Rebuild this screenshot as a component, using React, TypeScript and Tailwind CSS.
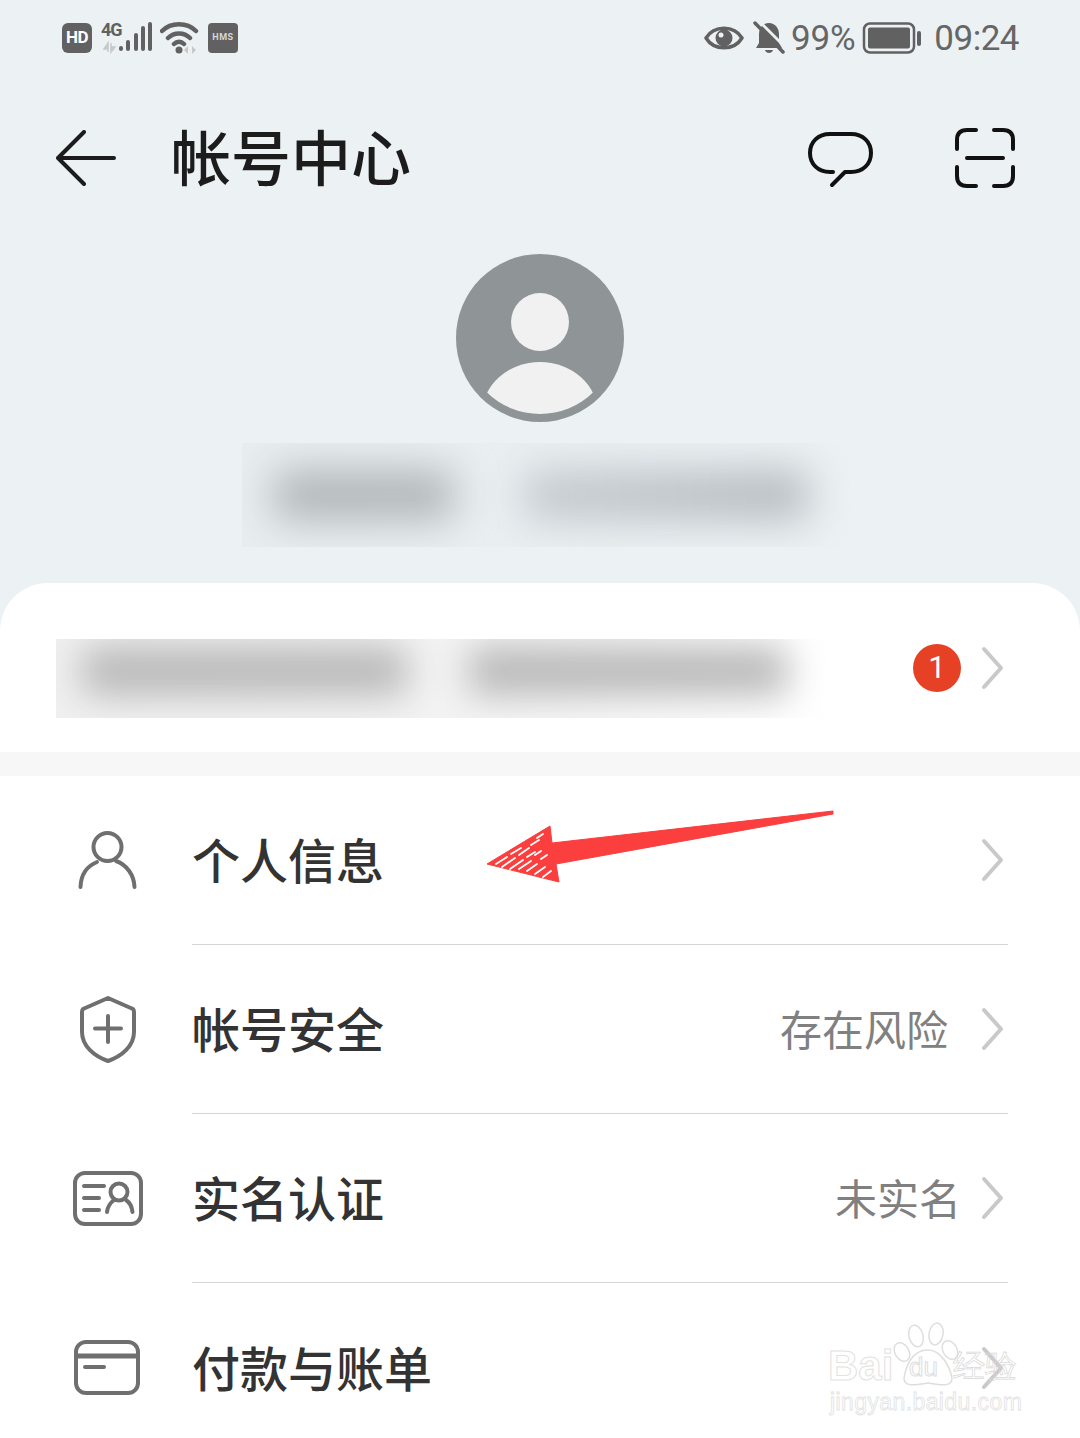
import type { ReactNode } from "react";

const Chevron = () => (
  <svg width="24" height="44" viewBox="0 0 24 44" fill="none" className="shrink-0">
    <path d="M4 3 L21 22 L4 41" stroke="#c9c9c9" strokeWidth="4" strokeLinecap="round" strokeLinejoin="round" />
  </svg>
);

const UserIcon = () => (
  <svg width="60" height="60" viewBox="0 0 60 60" fill="none" stroke="#6f6f6f" strokeWidth="4" strokeLinecap="round">
    <circle cx="29.5" cy="16" r="14" />
    <path d="M2.500 56 C3 44 9 35 19 31" />
    <path d="M38 30 C49 34 56 44 56.500 56" />
  </svg>
);

const ShieldIcon = () => (
  <svg width="60" height="68" viewBox="0 0 60 68" fill="none" stroke="#6f6f6f" strokeWidth="4" strokeLinecap="round" strokeLinejoin="round">
    <path d="M30 2 L55 13 Q56 14 56 16 L56 36 C56 50 44 60 30 65 C16 60 4 50 4 36 L4 16 Q4 14 5 13 Z" />
    <path d="M30 20 L30 46 M17 32.500 L43 32.500" />
  </svg>
);

const IdCardIcon = () => (
  <svg width="72" height="56" viewBox="0 0 72 56" fill="none" stroke="#6f6f6f" strokeWidth="4" strokeLinecap="round">
    <rect x="3" y="2" width="66" height="51" rx="10" />
    <path d="M12 15 L32 15 M12 27 L27 27 M12 39 L27 39" />
    <circle cx="47" cy="21" r="8.500" />
    <path d="M35 41 C35.500 36 38 32 42 29 M54 29 C57 31 60 36 60.500 41" />
  </svg>
);

const CardIcon = () => (
  <svg width="68" height="56" viewBox="0 0 68 56" fill="none" stroke="#6f6f6f" strokeWidth="4" strokeLinecap="round">
    <rect x="2" y="2" width="62" height="51" rx="10" />
    <path d="M2 16 L64 16" strokeWidth="5" strokeLinecap="butt" />
    <path d="M11 27 L30 27" />
  </svg>
);

const Row = ({ icon, label, value, valueClass }: { icon: ReactNode; label: string; value?: string; valueClass?: string }) => (
  <div className="flex h-[169px] items-stretch">
    <div className="flex w-[192px] shrink-0 items-center justify-center pl-[23px]">{icon}</div>
    <div className="mr-[72px] flex flex-1 items-center border-b border-[#d4d4d4]">
      <span className="flex-1 pb-[4px] text-[48px] font-medium leading-none text-[#333333]">{label}</span>
      {value && <span className={`pb-[3px] text-[42px] leading-none text-[#808080] ${valueClass}`}>{value}</span>}
      <div className="mr-[4px]"><Chevron /></div>
    </div>
  </div>
);

const StatusBar = () => (
  <div className="flex h-[76px] items-center justify-between pl-[62px] pr-[61px] text-[#616161]">
    <div className="flex items-center">
      <div className="flex h-[30px] w-[30px] items-center justify-center rounded-[6px] bg-[#616161] font-['Roboto',sans-serif] text-[17px] font-bold tracking-[-0.5px] text-white">HD</div>
      <div className="relative ml-[9px] h-[32px] w-[52px]">
        <span className="absolute left-0 top-[-2px] font-['Roboto',sans-serif] text-[18px] font-bold leading-[20px] tracking-[-1px]">4G</span>
        <svg width="52" height="32" viewBox="0 0 52 32" fill="none" className="absolute left-0 top-0">
          <path d="M7 21 L3 27 L7 27 Z M7 21 L7 30 M10 30 L10 21 M10 30 L14 25 L10 25 Z" fill="#c8c8c8" stroke="#c8c8c8" strokeWidth="1.500" />
          <path d="M20 26 L20 27 M27 20 L27 27 M35 13 L35 27 M42 6 L42 27 M49 2 L49 27" stroke="#616161" strokeWidth="4" strokeLinecap="round" />
        </svg>
      </div>
      <svg width="40" height="34" viewBox="0 0 40 34" fill="none" className="ml-[7px]">
        <path d="M2 10 C11 1 27 1 36 10 M8 17 C14 11 24 11 30 17 M14 23 C17 20 21 20 24 23" stroke="#616161" strokeWidth="4.500" strokeLinecap="round" />
        <circle cx="19" cy="29" r="3.500" fill="#616161" />
        <path d="M28 25 L24 29 L28 33 Z M32 25 L36 29 L32 33 Z" fill="#c8c8c8" />
      </svg>
      <div className="ml-[8px] flex h-[30px] w-[30px] items-center justify-center rounded-[4px] bg-[#616161] font-['Roboto',sans-serif] text-[9px] font-bold tracking-[0.5px] text-[#d8d8d8]">HMS</div>
    </div>
    <div className="flex items-center">
      <svg width="40" height="28" viewBox="0 0 40 28" fill="none">
        <path d="M2 14 C10 1 30 1 38 14 C30 27 10 27 2 14 Z" stroke="#616161" strokeWidth="3.500" strokeLinejoin="round" />
        <circle cx="20" cy="14" r="8.500" fill="#616161" />
        <circle cx="17" cy="11" r="2.500" fill="#ecf1f4" />
      </svg>
      <svg width="32" height="34" viewBox="0 0 32 34" fill="none" className="ml-[9px]">
        <path d="M3 27 L6 22 L6 13 C6 7 10 2 16 2 C22 2 26 7 26 13 L26 22 L29 27 Z" fill="#616161" />
        <path d="M12 29 L20 29 C19 33 13 33 12 29 Z" fill="#616161" />
        <path d="M5 -1 L34 28" stroke="#ecf1f4" strokeWidth="3" />
        <path d="M2 2 L30 31" stroke="#616161" strokeWidth="3.500" strokeLinecap="round" />
      </svg>
      <span className="ml-[6px] font-['Roboto',sans-serif] text-[35px] font-normal leading-none tracking-[-0.2px] text-[#666666]">99%</span>
      <svg width="60" height="32" viewBox="0 0 60 32" fill="none" className="ml-[7px]">
        <rect x="2" y="1.500" width="50" height="29" rx="6" stroke="#616161" strokeWidth="2.500" />
        <rect x="6" y="5.500" width="42" height="21" rx="2" fill="#616161" />
        <rect x="55" y="9" width="4" height="15" rx="2" fill="#616161" />
      </svg>
      <span className="ml-[12px] font-['Roboto',sans-serif] text-[35px] font-normal leading-none tracking-[-0.5px] text-[#666666]">09:24</span>
    </div>
  </div>
);

const Header = () => (
  <div className="flex h-[164px] items-center pl-[56px] pr-[64px] text-[#1c1c1c]">
    <svg width="60" height="56" viewBox="0 0 60 56" fill="none">
      <path d="M28 2 L2 28 L28 54 M2 28 L58 28" stroke="#1c1c1c" strokeWidth="4" strokeLinecap="round" strokeLinejoin="round" />
    </svg>
    <span className="ml-[55px] flex-1 pb-[6px] text-[60px] font-medium leading-none">帐号中心</span>
    <svg width="70" height="60" viewBox="0 0 70 60" fill="none">
      <path d="M27 44 L24 44 C12 44 4 36 4 25 C4 14 12 6 24 6 L45 6 C57 6 65 14 65 25 C65 36 57 44 45 44 L39 44 L26 57" stroke="#111" strokeWidth="4" strokeLinecap="round" strokeLinejoin="round" />
    </svg>
    <svg width="62" height="62" viewBox="0 0 62 62" fill="none" className="ml-[78px]">
      <path d="M22 3 L13 3 Q3 3 3 13 L3 22 M40 3 L49 3 Q59 3 59 13 L59 22 M3 40 L3 49 Q3 59 13 59 L22 59 M59 40 L59 49 Q59 59 49 59 L40 59 M13 31 L49 31" stroke="#111" strokeWidth="4" strokeLinecap="round" />
    </svg>
  </div>
);

const Avatar = () => (
  <svg width="168" height="168" viewBox="0 0 168 168" className="mx-auto mt-[14px] block">
    <defs>
      <clipPath id="inner"><circle cx="84" cy="84" r="76" /></clipPath>
    </defs>
    <circle cx="84" cy="84" r="84" fill="#8f9497" />
    <circle cx="84" cy="68" r="29" fill="#f1f1f1" />
    <ellipse cx="84" cy="160" rx="58" ry="52" fill="#f1f1f1" clipPath="url(#inner)" />
  </svg>
);

const Watermark = () => (
  <div className="pointer-events-none absolute left-[828px] top-[1322px] h-[96px] w-[196px] font-['Liberation_Sans',sans-serif]">
    <svg width="110" height="66" viewBox="0 0 110 66" fill="none" stroke="#dedede" strokeWidth="1.500" className="absolute left-[50px] top-0">
      <ellipse cx="38" cy="14" rx="7" ry="11" transform="rotate(-15 38 14)" />
      <ellipse cx="58" cy="12" rx="7" ry="11" transform="rotate(10 58 12)" />
      <ellipse cx="24" cy="30" rx="7" ry="10" transform="rotate(-30 24 30)" />
      <ellipse cx="72" cy="28" rx="7" ry="10" transform="rotate(-30 72 28)" />
      <path d="M26 56 C28 44 34 28 50 28 C64 28 72 46 74 56 C74 64 66 64 50 61 C34 64 26 64 26 56 Z" />
    </svg>
    <span className="absolute left-0 top-[22px] text-[42px] font-bold leading-[44px] text-transparent [-webkit-text-stroke:1px_#e2e2e2]">Bai</span>
    <span className="absolute left-[81px] top-[31px] text-[26px] leading-[28px] text-transparent [-webkit-text-stroke:1px_#dedede]">du</span>
    <span className="absolute left-[125px] top-[26px] text-[32px] font-normal leading-[36px] text-transparent [-webkit-text-stroke:0.7px_#d8d8d8]">经验</span>
    <span className="absolute left-[2px] top-[67px] text-[23px] leading-[26px] tracking-[0.4px] text-transparent [-webkit-text-stroke:0.8px_#e2e2e2]">jingyan.baidu.com</span>
  </div>
);

const RedArrow = () => (
  <svg width="350" height="76" viewBox="0 0 350 76" className="pointer-events-none absolute left-[485px] top-[809px]">
    <path d="M2 55 L65 17 L67 34 L348 2 L348 5 L71 55 L74 73 Z" fill="#fb3e3e" stroke="#fb3e3e" strokeWidth="1" strokeLinejoin="round" />
    <path d="M11 55 L22 48 M26 45 L36 39 M17 58 L30 49 M34 46 L44 39 M25 60 L38 51 M42 48 L50 43 M34 60 L46 52 M50 46 L56 42 M42 62 L52 55 M56 50 L62 46 M50 65 L60 58 M58 68 L66 62 M46 36 L54 31 M52 29 L58 25" stroke="#fff" strokeWidth="1.800" strokeLinecap="round" fill="none" />
  </svg>
);

export default function App() {
  return (
    <div className="relative h-[1438px] w-[1080px] overflow-hidden bg-[#ecf1f4] font-['Noto_Sans_CJK_SC',sans-serif]">
      <StatusBar />
      <Header />
      <Avatar />
      <div className="ml-[242px] mt-[21px] h-[104px] w-[608px] overflow-hidden bg-gradient-to-r from-[#e8edf0] to-[#ecf1f4]">
        <div className="flex h-full items-center pl-[32px]">
          <div className="h-[50px] w-[180px] rounded-[8px] bg-[#b0b5b8] blur-[20px]" />
          <div className="ml-[70px] h-[50px] w-[284px] rounded-[8px] bg-gradient-to-r from-[#c4cace] to-[#b4babe] blur-[20px]" />
        </div>
      </div>
      <div className="mt-[36px] rounded-t-[48px] bg-white">
        <div className="flex h-[169px] items-center pl-[56px] pr-[78px]">
          <div className="mt-[22px] flex h-[79px] w-[774px] items-center overflow-hidden bg-gradient-to-r from-[#f0f0f0] via-[#f3f3f3] to-white pb-[16px] pl-[26px]">
            <div className="h-[48px] w-[325px] rounded-[8px] bg-[#b8b8b8] blur-[18px]" />
            <div className="ml-[62px] h-[48px] w-[318px] rounded-[8px] bg-[#b8b8b8] blur-[18px]" />
          </div>
          <div className="ml-auto flex h-[48px] w-[48px] items-center justify-center rounded-full bg-[#e64125] font-['Roboto',sans-serif] text-[31px] leading-none text-white">1</div>
          <div className="ml-[19px] -mr-[2px]"><Chevron /></div>
        </div>
        <div className="h-[24px] bg-[#f7f7f7]" />
        <Row icon={<UserIcon />} label="个人信息" />
        <Row icon={<ShieldIcon />} label="帐号安全" value="存在风险" valueClass="mr-[32px]" />
        <Row icon={<IdCardIcon />} label="实名认证" value="未实名" valueClass="mr-[19px]" />
        <div className="flex h-[169px] items-center">
          <div className="flex w-[192px] shrink-0 items-center justify-center pl-[24px]"><CardIcon /></div>
          <span className="flex-1 pb-[4px] text-[48px] font-medium leading-none text-[#333333]">付款与账单</span>
          <div className="mr-[76px]"><Chevron /></div>
        </div>
      </div>
      <RedArrow />
      <Watermark />
    </div>
  );
}
